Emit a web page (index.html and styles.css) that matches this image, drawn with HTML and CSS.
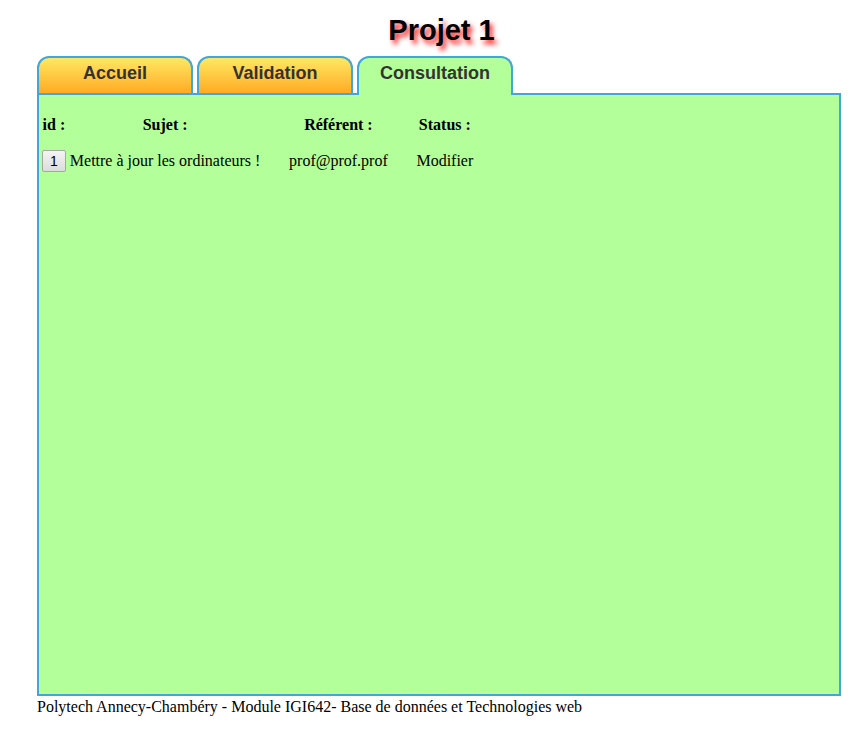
FILE: index.html
```html
<!DOCTYPE html>
<html lang="fr">
<head>
<meta charset="utf-8">
<title>Projet 1</title>
<link rel="stylesheet" href="styles.css">
</head>
<body>
<div class="page">
  <h1 class="title">Projet 1</h1>
  <nav class="tabs">
    <a class="tab">Accueil</a>
    <a class="tab">Validation</a>
    <a class="tab tab-active">Consultation</a>
  </nav>
  <main class="panel">
    <table class="list">
      <thead>
        <tr>
          <th class="col-id">id :</th>
          <th>Sujet :</th>
          <th class="col-ref">Référent :</th>
          <th>Status :</th>
        </tr>
      </thead>
      <tbody>
        <tr>
          <td class="col-id"><button class="id-btn" type="button">1</button></td>
          <td>Mettre à jour les ordinateurs !</td>
          <td class="col-ref center">prof@prof.prof</td>
          <td class="center">Modifier</td>
        </tr>
      </tbody>
    </table>
  </main>
  <footer class="footer">Polytech Annecy-Chambéry - Module IGI642- Base de données et Technologies web</footer>
</div>
</body>
</html>
```
FILE: styles.css
```css
html, body {
  margin: 0;
  padding: 0;
  background: #ffffff;
}

body {
  font-family: "Liberation Serif", "Times New Roman", serif;
  font-size: 16px;
  color: #000;
}

.page {
  margin-left: 37px;
  width: 804px;
}

.title {
  margin: 14px 0 10px 5px;
  font-family: "Liberation Sans", Arial, sans-serif;
  font-size: 29px;
  line-height: 32px;
  font-weight: bold;
  text-align: center;
  color: #000;
  text-shadow: 3px 4px 5px #ff1e1e;
}

.tabs {
  display: flex;
  gap: 4px;
  height: 39px;
  align-items: flex-start;
}

.tab {
  box-sizing: border-box;
  width: 156px;
  height: 37px;
  border: 2px solid #3fa7da;
  border-bottom: none;
  border-radius: 12px 12px 0 0;
  background: linear-gradient(#ffe862, #ffab25);
  font-family: "Liberation Sans", Arial, sans-serif;
  font-size: 18px;
  font-weight: bold;
  line-height: 30px;
  text-align: center;
  color: #333333;
}

.tab-active {
  height: 39px;
  background: #b3ff99;
  position: relative;
  z-index: 1;
}

.panel {
  margin-top: -2px;
  height: 599px;
  border: 2px solid #3fa7da;
  background: #b3ff99;
}

.list {
  margin-top: 12px;
  border-spacing: 2px;
}

.list th,
.list td {
  padding: 7px 1px;
  font-size: 16px;
  line-height: 18px;
}

.list th {
  font-weight: bold;
  text-align: center;
}

.col-ref {
  width: 148px;
}

.center {
  text-align: center;
}

.id-btn {
  display: block;
  box-sizing: border-box;
  height: 22px;
  padding: 0 7px;
  border: 1px solid #a6a6a6;
  border-radius: 2px;
  background: linear-gradient(#f4f4f4, #dcdcdc);
  font-family: "Liberation Sans", Arial, sans-serif;
  font-size: 14px;
  line-height: 20px;
  color: #000;
}

.footer {
  padding-top: 2px;
  line-height: 18px;
}
```
